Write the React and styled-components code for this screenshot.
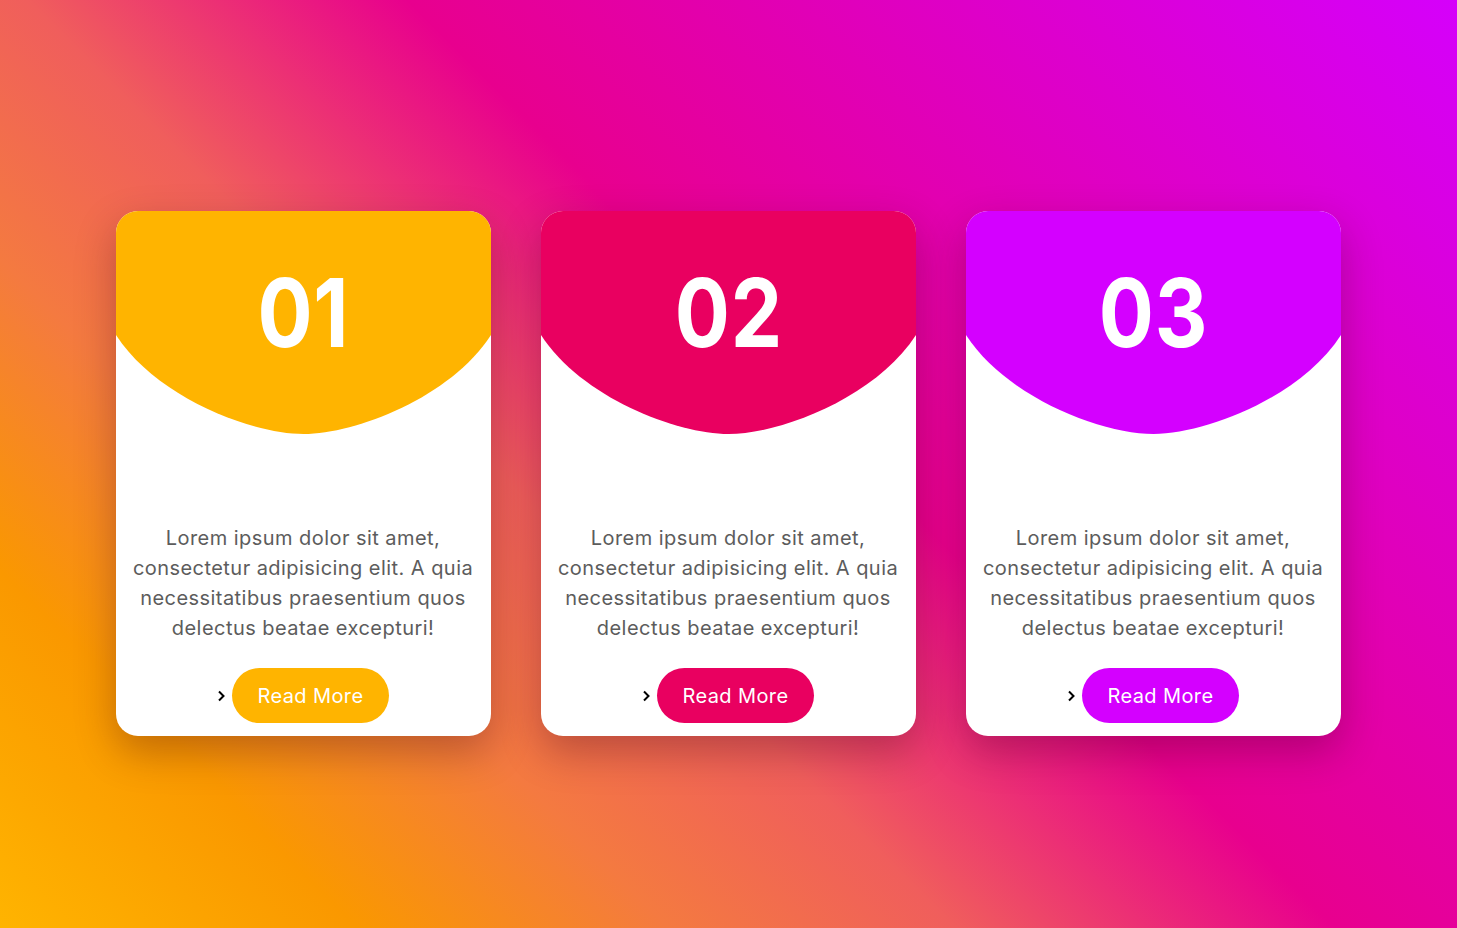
import React from "react";
import styled, { createGlobalStyle } from "styled-components";

const GlobalStyle = createGlobalStyle`
  html, body { margin: 0; padding: 0; }
  body { font-family: Inter, "Open Sans", sans-serif; }
  * { box-sizing: border-box; }
`;

const Page = styled.main`
  min-height: 100vh;
  padding: 19px 1px 0 0;
  display: flex;
  align-items: center;
  justify-content: center;
  background: linear-gradient(
    45deg,
    #ffb400 0%,
    #fa9800 15%,
    #f47a40 28%,
    #f05e5c 40%,
    #e8008e 56%,
    #d500fb 100%
  );
`;

const Row = styled.section`
  display: flex;
  gap: 50px;
`;

const Card = styled.article`
  width: 375px;
  height: 525px;
  background: #ffffff;
  border-radius: 22px;
  overflow: hidden;
  display: flex;
  flex-direction: column;
  align-items: center;
  box-shadow: 0 16px 40px rgba(60, 0, 20, 0.3);
`;

const Header = styled.div`
  display: grid;
  width: 100%;
  height: 224px;
  & > * { grid-area: 1 / 1; }
`;

const Shape = styled.svg`
  display: block;
  width: 375px;
  height: 224px;
`;

const Number = styled.h2`
  margin: 0;
  padding-top: 54px;
  padding-left: 1px;
  justify-self: center;
  align-self: start;
  font-family: Inter, sans-serif;
  font-size: 95px;
  font-weight: 700;
  line-height: 1;
  letter-spacing: 1px;
  color: #ffffff;
  transform: scaleX(0.86);
`;

const Text = styled.p`
  margin: auto 0 0;
  padding: 0 10px;
  text-align: center;
  font-size: 20px;
  letter-spacing: 0.45px;
  line-height: 30px;
  color: #5c5c5c;
  white-space: nowrap;
`;

const Actions = styled.div`
  display: flex;
  align-items: center;
  gap: 6px;
  margin: 25px 0 13px;
`;

const Chevron = styled.svg`
  display: block;
  width: 9px;
  height: 12px;
`;

const Button = styled.a`
  display: inline-flex;
  align-items: center;
  justify-content: center;
  height: 55px;
  padding: 0 25px;
  border-radius: 28px;
  background: ${(p) => p.$color};
  color: #ffffff;
  font-size: 20px;
  letter-spacing: 0.4px;
  font-weight: 400;
  text-decoration: none;
`;

const cards = [
  { num: "01", color: "#ffb400" },
  { num: "02", color: "#e90060" },
  { num: "03", color: "#d400ff" },
];

export default function App() {
  return (
    <>
      <GlobalStyle />
      <Page>
        <Row>
          {cards.map((c) => (
            <Card key={c.num}>
              <Header>
                <Shape viewBox="0 0 375 224" preserveAspectRatio="none">
                  <path
                    d="M0 0 H375 V124 C335 186 240 223 187.5 223 C135 223 40 186 0 124 Z"
                    fill={c.color}
                  />
                </Shape>
                <Number>{c.num}</Number>
              </Header>
              <Text>
                Lorem ipsum dolor sit amet,
                <br />
                consectetur adipisicing elit. A quia
                <br />
                necessitatibus praesentium quos
                <br />
                delectus beatae excepturi!
              </Text>
              <Actions>
                <Chevron viewBox="0 0 9 12">
                  <path d="M2 1.5 L6.5 6 L2 10.5" fill="none" stroke="#000" strokeWidth="2" />
                </Chevron>
                <Button href="#" $color={c.color}>Read More</Button>
              </Actions>
            </Card>
          ))}
        </Row>
      </Page>
    </>
  );
}
